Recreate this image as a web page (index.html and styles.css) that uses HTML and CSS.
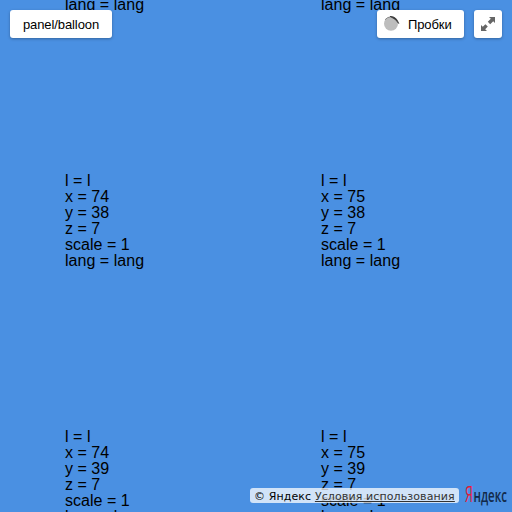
FILE: index.html
```
<!DOCTYPE html>
<html lang="ru">
<head>
<meta charset="utf-8">
<title>panel/balloon</title>
<link rel="stylesheet" href="styles.css">
</head>
<body>
<main class="map">
  <div class="tiles">
    <div class="tile">l = l<br>x = 74<br>y = 37<br>z = 7<br>scale = 1<br>lang = lang</div>
    <div class="tile">l = l<br>x = 75<br>y = 37<br>z = 7<br>scale = 1<br>lang = lang</div>
    <div class="tile">l = l<br>x = 74<br>y = 38<br>z = 7<br>scale = 1<br>lang = lang</div>
    <div class="tile">l = l<br>x = 75<br>y = 38<br>z = 7<br>scale = 1<br>lang = lang</div>
    <div class="tile">l = l<br>x = 74<br>y = 39<br>z = 7<br>scale = 1<br>lang = lang</div>
    <div class="tile">l = l<br>x = 75<br>y = 39<br>z = 7<br>scale = 1<br>lang = lang</div>
  </div>
  <div class="controls">
    <button class="btn btn-panel">panel/balloon</button>
    <button class="btn btn-traffic">
      <svg class="light" width="18" height="16" viewBox="0 0 18 16"><circle cx="8" cy="7.700" r="7" fill="#bdbdbd"/><path d="M2 3.800Q4 1.200 7.500 .8" stroke="#888" stroke-width="1" fill="none"/><path d="M7 .4Q13.500 .2 15.700 7.500Q13 2.600 7 .4Z" fill="#333" stroke="#333" stroke-width=".8"/></svg>
      <span>Пробки</span>
    </button>
    <button class="btn btn-full" aria-label="Fullscreen">
      <svg width="14" height="14" viewBox="0 0 14 14" fill="#666"><path d="M8 0H14V6L12.200 4.200L9.200 7.200L6.800 4.800L9.800 1.800ZM6 14H0V8L1.800 9.800L4.400 7.200L6.800 9.600L4.200 12.200Z"/></svg>
    </button>
  </div>
  <footer class="footer">
    <div class="copy">© Яндекс <a class="terms">Условия использования</a></div>
    <svg class="logo" width="43" height="22" viewBox="0 0 43 22"><text class="logo-first" x="0" y="17" textLength="8" lengthAdjust="spacingAndGlyphs">Я</text><text class="logo-rest" x="8.500" y="17" textLength="33.500" lengthAdjust="spacingAndGlyphs">ндекс</text></svg>
  </footer>
</main>
</body>
</html>
```
FILE: styles.css
```
body {
  margin: 0;
}
.map {
  position: relative;
  width: 512px;
  height: 512px;
  overflow: hidden;
  background: #4a90e2;
  font-family: "Liberation Sans", Arial, sans-serif;
}
.tiles {
  display: grid;
  grid-template-columns: 256px 256px;
  grid-auto-rows: 256px;
  margin-top: -148px;
}
.tile {
  box-sizing: border-box;
  padding: 65px 0 0 65px;
  font-size: 16px;
  line-height: 16px;
  letter-spacing: .03px;
  color: #000;
}
.controls {
  position: absolute;
  top: 10px;
  left: 10px;
  right: 10px;
  display: flex;
  gap: 10px;
}
.btn {
  box-sizing: border-box;
  display: flex;
  align-items: center;
  justify-content: center;
  height: 28px;
  padding: 0;
  border: 0;
  border-radius: 3px;
  background: #fff;
  box-shadow: 0 1px 3px rgba(0, 0, 0, .3);
  font: 13px "Liberation Sans", Arial, sans-serif;
  letter-spacing: -.1px;
  color: #000;
}
.btn-panel {
  width: 102px;
  margin-right: auto;
}
.btn-traffic {
  width: 87px;
  justify-content: flex-start;
  padding-left: 6px;
}
.light {
  margin-right: 7px;
}
.btn-full {
  width: 28px;
}
.footer {
  position: absolute;
  right: 4px;
  bottom: 5px;
  display: flex;
  align-items: flex-start;
  gap: 6px;
}
.copy {
  box-sizing: border-box;
  width: 209px;
  height: 15px;
  margin-top: 3px;
  padding-left: 4px;
  border-radius: 3px;
  background: rgba(255, 255, 255, .75);
  font: 11px/18px "DejaVu Sans", sans-serif;
  letter-spacing: .11px;
  white-space: nowrap;
  color: #000;
}
.terms {
  color: #333;
  text-decoration: underline;
}
.logo {
  overflow: visible;
}
.logo-first,
.logo-rest {
  font-family: "Open Sans", sans-serif;
  font-size: 21px;
  fill: #e31b36;
}
.logo-rest {
  font-size: 18px;
  font-weight: 600;
  fill: #122a4a;
}
```
